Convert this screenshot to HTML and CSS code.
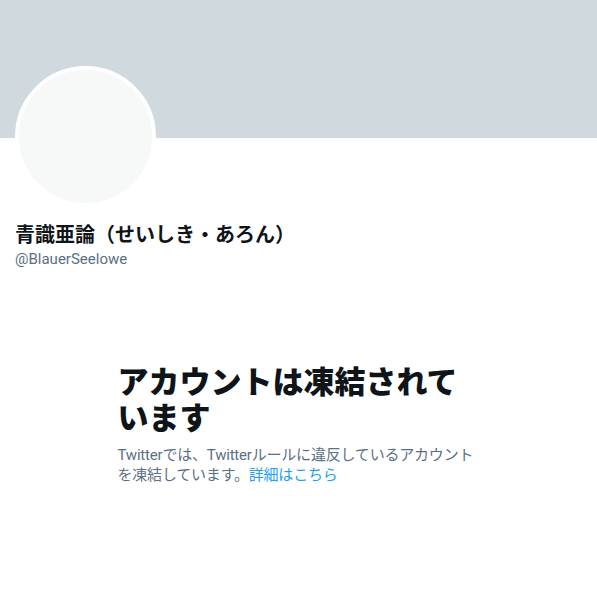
FILE: index.html
```html
<!doctype html>
<html>
  <head>
    <title>青識亜論（せいしき・あろん） / Twitter</title>
    <link rel="stylesheet" href="styles.css">
  </head>
  <body>
    <div class="profile">
      <div class="banner"></div>
      <div class="profile-head">
        <div class="avatar"></div>
        <div class="names">
          <div class="display-name">青識亜論（せいしき・あろん）</div>
          <div class="handle">@BlauerSeelowe</div>
        </div>
      </div>
      <div class="empty-state">
        <h2 class="empty-title">アカウントは凍結されています</h2>
        <p class="empty-text">Twitterでは、Twitterルールに違反しているアカウントを凍結しています。<a href="#" class="link">詳細はこちら</a></p>
      </div>
    </div>
  </body>
</html>
```

FILE: styles.css
```css
html, body {
  margin: 0;
  background: #fff;
  font-family: Roboto, "Noto Sans CJK JP", sans-serif;
  color: #0f1419;
}
.banner {
  height: 138px;
  background: #cfd9de;
}
.profile-head {
  padding: 0 15px;
}
.avatar {
  width: 133px;
  height: 133px;
  margin-top: -72px;
  border: 4px solid #fff;
  border-radius: 50%;
  background: #f7f9f9;
}
.names {
  margin-top: 16px;
}
.display-name {
  font-size: 20px;
  font-weight: 700;
  line-height: 25px;
}
.handle {
  margin-top: 1px;
  font-size: 15px;
  line-height: 20px;
  color: #5b7083;
}
.empty-state {
  max-width: 362px;
  margin: 96px auto 0;
  padding: 0 20px;
}
.empty-title {
  margin: 0;
  font-size: 31px;
  font-weight: 800;
  line-height: 36px;
}
.empty-text {
  margin: 8px 0 0;
  font-size: 15px;
  line-height: 20px;
  letter-spacing: -0.2px;
  color: #5b7083;
}
.link {
  color: #1da1f2;
  text-decoration: none;
}
```
